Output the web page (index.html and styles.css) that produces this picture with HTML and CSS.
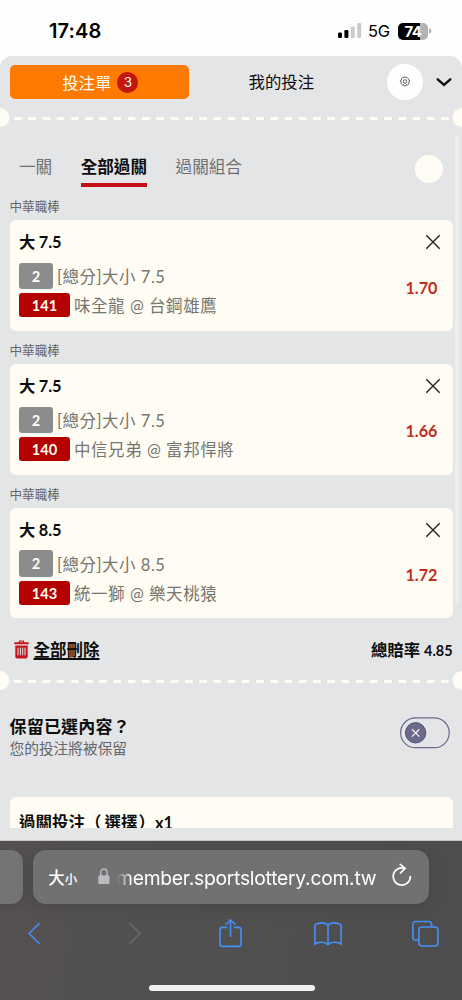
FILE: index.html
```html
<!DOCTYPE html>
<html lang="zh-Hant">
<head>
<meta charset="utf-8">
<meta name="viewport" content="width=device-width, initial-scale=1">
<title>投注單</title>
<link rel="stylesheet" href="styles.css">
</head>
<body>
<div class="phone">
  <header class="status">
    <span class="time">17:48</span>
    <svg class="signal" width="24" height="16" viewBox="0 0 24 16"><rect x="0" y="9.5" width="4" height="5.5" rx="1.2"/><rect x="6.4" y="7" width="4" height="8" rx="1.2"/><rect class="dim" x="12.8" y="3.5" width="4" height="11.5" rx="1.2"/><rect class="dim" x="19.2" y="0" width="4" height="15" rx="1.2"/></svg>
    <span class="net">5G</span>
    <span class="battery">74</span>
    <svg class="nub" width="3" height="6" viewBox="0 0 3 6"><path d="M0 0Q2.5 1 2.5 3T0 6Z"/></svg>
  </header>
  <main class="slip">
    <nav class="top">
      <button class="slip-button">投注單<span class="count">3</span></button>
      <span class="mine">我的投注</span>
      <span class="settings"><svg width="12" height="12" viewBox="0 0 12 12"><path d="M5.1 1h1.8l.4 1 1-.4 1.3 1.2-.4 1 1.3.5v1.8l-1.2.6.4 1.1-1.2 1.3-1.1-.4-.5 1.2H5.1l-.5-1.2-1.1.4-1.3-1.2.5-1.2-1.3-.6V4.4l1.2-.5-.4-1.1 1.2-1.2 1.2.4z"/><circle cx="6" cy="5.5" r="1.8"/></svg></span>
      <svg class="chevron" width="16" height="12" viewBox="0 0 16 12"><path d="M1.7 3.3 8 8.9l6.3-5.6"/></svg>
    </nav>
    <div class="divider"><svg width="462" height="20" viewBox="0 0 462 20"><circle cx="0" cy="9.5" r="9.5"/><path d="M14 10.5H452" stroke-dasharray="7.6 6.64"/><circle cx="462" cy="9.5" r="9.5"/></svg></div>
    <div class="modes">
      <span class="mode">一關</span><span class="mode active">全部過關</span><span class="mode">過關組合</span><i class="dot"></i>
    </div>
    <section class="bet">
      <h2 class="league">中華職棒</h2>
      <article class="card">
        <div class="pick"><b>大 7.5</b><svg class="close" width="16" height="16" viewBox="0 0 16 16"><path d="m1.3 1.3 13.4 13.4m0-13.4L1.3 14.7"/></svg></div>
        <div class="info">
          <div><p class="line"><span class="tag grey">2</span><span class="kind">[總分]大小 7.5</span></p><p class="line"><span class="tag red">141</span><span class="teams">味全龍 @ 台鋼雄鷹</span></p></div>
          <strong class="odds">1.70</strong>
        </div>
      </article>
    </section>
    <section class="bet">
      <h2 class="league">中華職棒</h2>
      <article class="card">
        <div class="pick"><b>大 7.5</b><svg class="close" width="16" height="16" viewBox="0 0 16 16"><path d="m1.3 1.3 13.4 13.4m0-13.4L1.3 14.7"/></svg></div>
        <div class="info">
          <div><p class="line"><span class="tag grey">2</span><span class="kind">[總分]大小 7.5</span></p><p class="line"><span class="tag red">140</span><span class="teams">中信兄弟 @ 富邦悍將</span></p></div>
          <strong class="odds">1.66</strong>
        </div>
      </article>
    </section>
    <section class="bet">
      <h2 class="league">中華職棒</h2>
      <article class="card">
        <div class="pick"><b>大 8.5</b><svg class="close" width="16" height="16" viewBox="0 0 16 16"><path d="m1.3 1.3 13.4 13.4m0-13.4L1.3 14.7"/></svg></div>
        <div class="info">
          <div><p class="line"><span class="tag grey">2</span><span class="kind">[總分]大小 8.5</span></p><p class="line"><span class="tag red">143</span><span class="teams">統一獅 @ 樂天桃猿</span></p></div>
          <strong class="odds">1.72</strong>
        </div>
      </article>
    </section>
    <i class="scrollbar"></i>
    <div class="summary">
      <svg class="trash" width="15" height="19" viewBox="0 0 15 19"><path d="M.3 2.3h4.4L5.3.6h4.4l.6 1.7h4.4v1.9H.3zM6.1 2.3h2.8l-.3-.7H6.4z" fill-rule="evenodd"/><path d="M1.3 5.4h12.4v11.2q0 1.9-1.9 1.9H3.2q-1.9 0-1.9-1.9z"/><path class="slots" d="M4 7.7v7.6M6.4 7.7v7.6M8.7 7.7v7.6M11 7.7v7.6"/></svg>
      <span class="clear">全部刪除</span>
      <span class="total">總賠率 <span class="sum">4.85</span></span>
    </div>
    <div class="divider"><svg width="462" height="20" viewBox="0 0 462 20"><circle cx="0" cy="9.5" r="9.5"/><path d="M14 10.5H452" stroke-dasharray="7.6 6.64"/><circle cx="462" cy="9.5" r="9.5"/></svg></div>
    <div class="keep">
      <div><p class="keep-title">保留已選內容<span class="ask">？</span></p><p class="keep-note">您的投注將被保留</p></div>
      <svg class="toggle" width="50" height="32" viewBox="0 0 50 32"><rect class="track" x=".6" y=".9" width="48.6" height="29.8" rx="14.9"/><circle cx="15.6" cy="15.8" r="10.2"/><path d="m12 12.2 7.4 7.4m0-7.4L12 19.6"/></svg>
    </div>
    <div class="stake">過關投注<span class="open">（</span>選擇<span class="shut">）</span><span class="times">x1</span></div>
  </main>
  <footer class="browser">
    <div class="address-row">
      <div class="prev-tab"></div>
      <div class="address">
        <span class="size-big">大</span><span class="size-small">小</span>
        <svg class="lock" width="12" height="17" viewBox="0 0 12 17"><path class="shackle" d="M2.7 8V4.2a3.2 3.2 0 0 1 6.4 0V8"/><rect x=".3" y="7.2" width="11.2" height="8.8" rx="1.6"/></svg>
        <span class="url">member.sportslottery.com.tw</span>
        <svg class="reload" width="20" height="24" viewBox="0 0 20 24"><path d="M12.6 5.3a8.6 8.6 0 1 0 5.8 8.2M8.3 1.4l4.8 3.9-4.5 4.6"/></svg>
      </div>
    </div>
    <div class="tools">
      <svg class="back" width="14" height="30" viewBox="0 0 14 30"><path d="M12.5 5.2 2 15.5l10.5 10.3"/></svg>
      <svg class="off" width="14" height="30" viewBox="0 0 14 30"><path d="M1.5 5.2 12 15.5 1.5 25.8"/></svg>
      <svg class="share" width="26" height="30" viewBox="0 0 26 30"><path d="M9.3 9.4H4.5Q2 9.4 2 12v13.7q0 2.7 2.6 2.7h15.8q2.6 0 2.6-2.7V12q0-2.6-2.5-2.6h-4.8M12.5 19V1.8M7.6 6.7l4.9-4.9 4.9 4.9"/></svg>
      <svg class="book" width="30" height="30" viewBox="0 0 30 30"><path d="M15 7.4Q13.2 4.9 9 4.9 4.2 4.9 1.9 7.2v18.9Q4 24.3 8.6 24.3q4 0 6.4 2.4 2.4-2.4 6.4-2.4 4.6 0 6.7 1.8V7.2Q25.8 4.9 21 4.9q-4.2 0-6 2.5zv19.3"/></svg>
      <svg class="tabs" width="28" height="30" viewBox="0 0 28 30"><rect x="7.9" y="9" width="19" height="19" rx="3"/><path d="M7.5 22.3H4.9q-3 0-3-3V6.5q0-3 3-3H17.6q3 0 3 3V9"/></svg>
    </div>
    <div class="home"></div>
  </footer>
</div>
</body>
</html>
```
FILE: styles.css
```css
* { box-sizing: border-box; }
body, p, h2 { margin: 0; }
body { background: #fefefe; color: #0c0c0c; font-family: Lato, "Noto Sans CJK TC", sans-serif; overflow: hidden; }
svg { display: block; flex: none; }
.phone { width: 462px; height: 1000px; overflow: hidden; display: flex; flex-direction: column; }
.status { height: 56px; flex: none; display: flex; align-items: center; padding: 6px 0 0 49px; font-family: Inter, sans-serif; color: #000; }
.time { font-size: 20px; font-weight: 600; width: 289px; letter-spacing: .1px; }
.signal .dim { fill: #cbcbcb; }
.net { font-size: 16.5px; margin-left: 6px; width: 24px; letter-spacing: -.2px; font-weight: 400; }
.battery { width: 30px; height: 17px; margin-left: 6px; border-radius: 5px; background: linear-gradient(90deg, #000 75%, #b3b3b3 75%); color: #fff; font-size: 15px; font-weight: 700; line-height: 17px; text-align: center; letter-spacing: -.6px; }
.nub { fill: #b3b3b3; margin-left: 1px; }
.slip { height: 785px; flex: none; position: relative; background: #e4e5e7; border-radius: 12px 12px 0 0; border-bottom: 1px solid #c5c7c7; overflow: hidden; }
.top { height: 52px; display: flex; align-items: center; padding: 0 10px 0 9.5px; }
.slip-button { width: 179.5px; height: 33.5px; padding: 0 0 0 2px; border: 0; border-radius: 5px; background: #ff7a00; color: #fffdf3; font: 16.4px Lato, "Noto Sans CJK TC", sans-serif; display: flex; align-items: center; justify-content: center; gap: 6px; }
.count { width: 21px; height: 21px; border-radius: 50%; background: #c5160c; font-size: 13.5px; line-height: 21px; font-family: Inter, sans-serif; }
.mine { font-size: 16.4px; margin: -2px 0 0 59.5px; width: 138.5px; }
.settings { width: 36px; height: 36px; border-radius: 50%; background: #fefefe; display: flex; align-items: center; justify-content: center; }
.settings svg { fill: none; stroke: #444; stroke-width: .8; }
.chevron { margin-left: 12.5px; fill: none; stroke: #111; stroke-width: 2.4; stroke-linecap: round; }
.divider { height: 20px; }
.divider svg { fill: #fffdf3; }
.divider path { stroke: #fffdf3; stroke-width: 3; }
.modes { height: 66px; display: flex; align-items: flex-start; padding: 25px 19px 0; gap: 28.5px; color: #707173; font-size: 16.6px; line-height: 29px; }
.mode { height: 34px; }
.active { color: #0c0c0c; font-weight: 700; border-bottom: 4px solid #c40e15; }
.dot { width: 28px; height: 28px; margin: 2px 0 0 auto; border-radius: 50%; background: #fffdf3; }
.bet { height: 143.8px; padding: 0 9.5px; }
.league { height: 26px; line-height: 25px; font-size: 12.6px; font-weight: 400; color: #656668; }
.card { height: 110.8px; border-radius: 6px; background: #fffdf3; padding: 10px 12px 0 9.5px; }
.pick { height: 24px; display: flex; align-items: center; justify-content: space-between; font-size: 16.3px; }
.pick b { font-weight: 700; word-spacing: -.5px; margin-top: -2px; }
.close { fill: none; stroke: #222; stroke-width: 1.4; }
.info { display: flex; align-items: center; justify-content: space-between; padding: 7.6px 3px 0 0; }
.line { display: flex; height: 29px; align-items: center; color: #77756f; font-size: 16.5px; white-space: nowrap; }
.tag { display: block; border-radius: 3px; color: #fffdf3; font-size: 14.6px; font-weight: 700; text-align: center; }
.grey { width: 34px; height: 26.5px; line-height: 27px; background: #8c8c8c; margin-right: 4px; }
.red { width: 51px; height: 24px; line-height: 25px; background: #b40000; margin-right: 4px; }
.kind { letter-spacing: .5px; }
.teams { letter-spacing: .55px; }
.odds { color: #c22b20; font-size: 16.2px; margin-top: -7px; }
.scrollbar { position: absolute; left: 455px; top: 79px; width: 4px; height: 469px; border-radius: 2px; background: #efeff0; }
.summary { height: 46px; display: flex; align-items: center; padding: 2px 9.5px 0 14px; font-weight: 700; }
.trash { fill: #c5161d; margin-right: 4.5px; }
.slots { stroke: #e4e5e7; stroke-width: 1; }
.clear { font-size: 16.5px; text-decoration: underline; text-decoration-thickness: 2px; text-underline-offset: 2px; text-decoration-skip-ink: none; }
.total { margin-left: auto; font-size: 16.4px; }
.sum { font-size: 14.4px; }
.keep { height: 106px; padding: 24px 12px 0 9.5px; display: flex; justify-content: space-between; }
.keep-title { font-size: 17px; font-weight: 700; line-height: 24px; letter-spacing: .2px; }
.ask { font-size: 17px; }
.keep-note { font-size: 14.7px; line-height: 19px; color: #666769; }
.toggle { margin-top: 2px; fill: #6c698a; stroke: #403d70; stroke-width: .8; }
.toggle .track { fill: none; stroke: #6c688d; stroke-width: 1.2; }
.toggle path { stroke: #f0eff5; stroke-width: 1.3; }
.stake { height: 31px; margin: 0 9.5px; padding: 10px 9.5px 0; overflow: hidden; border-radius: 6px 6px 0 0; background: #fffdf3; font-size: 16.5px; font-weight: 700; line-height: 32px; white-space: nowrap; }
.open { margin-right: 3px; }
.shut { margin-left: 1px; }
.browser { height: 159px; background: linear-gradient(100deg, #555150, #505050 45%, #4d4d4d); }
.address-row { height: 69px; padding-top: 9px; display: flex; gap: 10px; }
.prev-tab { width: 23.3px; height: 54px; border-radius: 0 12px 12px 0; background: #747474; box-shadow: 0 2px 10px #4448; }
.address { width: 395.5px; height: 54px; border-radius: 13px; background: #717171; box-shadow: 0 2px 14px #3c3c3c80; color: #fff; display: flex; align-items: center; padding-left: 15px; font-family: Inter, "Noto Sans CJK TC", sans-serif; }
.size-big { font-size: 16.5px; font-weight: 500; }
.size-small { font-size: 12.5px; font-weight: 500; margin-top: 3px; width: 33px; }
.lock { fill: #bbbbc2; margin-top: -2px; }
.shackle { fill: none; stroke: #bbbbc2; stroke-width: 1.4; }
.url { width: 259px; margin: 1px 0 0 7.5px; font-size: 19.3px; letter-spacing: -.25px; display: flex; justify-content: flex-end; overflow: hidden; mask-image: linear-gradient(90deg, transparent, #000 14px); }
.reload { margin-left: 16px; margin-top: -4px; fill: none; stroke: #fff; stroke-width: 1.7; stroke-linecap: round; }
.tools { height: 62px; padding: 8px 0 0 27px; display: flex; }
.tools svg { fill: none; stroke: #458ff7; stroke-width: 1.6; }
.tools .off { stroke: #6c6c6c; margin-left: 87px; }
.share { margin-left: 76px; }
.book { margin-left: 69px; }
.tabs { margin-left: 68px; }
.home { width: 166px; height: 6px; margin: 13px 0 0 148.5px; border-radius: 3px; background: #f0f0f0; }
```
